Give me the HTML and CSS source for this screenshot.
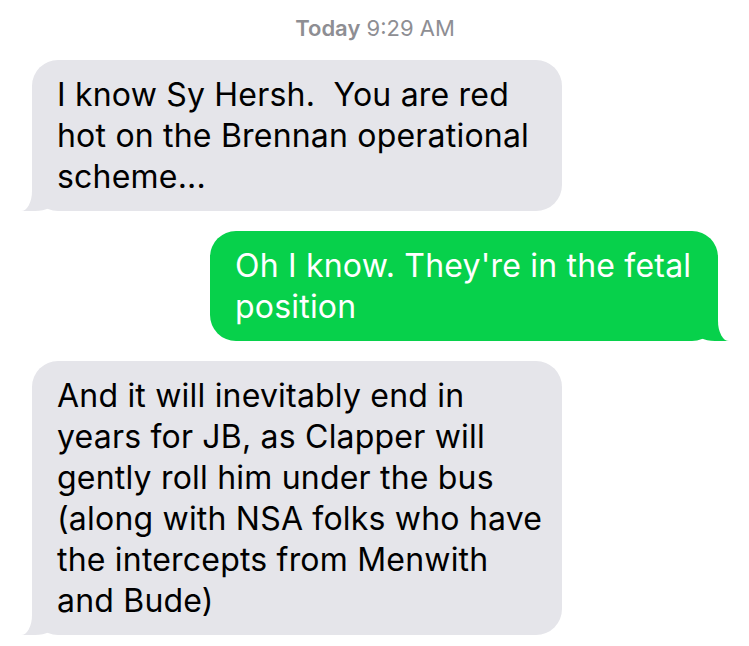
FILE: index.html
```html
<!DOCTYPE html>
<html>
<head>
    <title>Messages</title>
    <link rel="stylesheet" href="styles.css">
</head>
<body>
    <div class="thread">
        <div class="timestamp"><b>Today</b> 9:29 AM</div>
        <div class="bubble from-them">I know Sy Hersh.&nbsp; You are red hot on the Brennan operational scheme...</div>
        <div class="bubble from-me">Oh I know. They're in the fetal position</div>
        <div class="bubble from-them">And it will inevitably end in years for JB, as Clapper will gently roll him under the bus (along with NSA folks who have the intercepts from Menwith and Bude)</div>
    </div>
</body>
</html>
```

FILE: styles.css
```css
body {
    margin: 0;
    padding: 0;
    background-color: #fff;
    font-family: Inter, "Liberation Sans", Arial, sans-serif;
}
.thread {
    display: flex;
    flex-direction: column;
    gap: 20px;
    padding: 16px 31px 10px 32px;
}
.timestamp {
    text-align: center;
    color: #8e8e93;
    font-size: 22px;
    line-height: 24px;
}
.timestamp b {
    font-weight: 600;
}
.bubble {
    position: relative;
    font-size: 32px;
    line-height: 41px;
    letter-spacing: 0.2px;
    padding: 14px 18px 14px 25px;
    border-radius: 26px;
    box-sizing: border-box;
}
.from-them {
    align-self: flex-start;
    max-width: 530px;
    background-color: #e5e5ea;
    color: #000;
}
.from-me {
    align-self: flex-end;
    max-width: 508px;
    background-color: #07d14b;
    color: #fff;
}
.bubble::before,
.bubble::after {
    content: "";
    position: absolute;
    bottom: 0;
    height: 30px;
}
.from-them::before {
    left: -11px;
    width: 34px;
    background-color: #e5e5ea;
    border-bottom-right-radius: 20px 10px;
}
.from-them::after {
    left: -30px;
    width: 30px;
    background-color: #fff;
    border-bottom-right-radius: 11px 20px;
}
.from-me::before {
    right: -11px;
    width: 34px;
    background-color: #07d14b;
    border-bottom-left-radius: 20px 10px;
}
.from-me::after {
    right: -30px;
    width: 30px;
    background-color: #fff;
    border-bottom-left-radius: 11px 20px;
}
```
